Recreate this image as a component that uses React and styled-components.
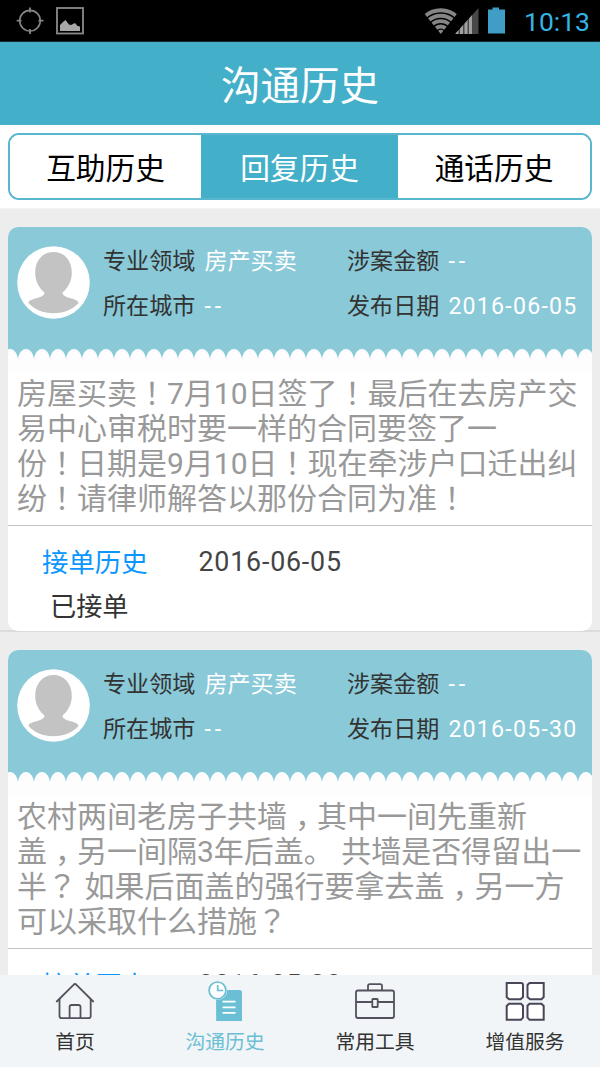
import React from 'react';
import styled, { createGlobalStyle, css } from 'styled-components';

const GlobalStyle = createGlobalStyle`
  * {
    box-sizing: border-box;
  }
  body {
    margin: 0;
    background: #ededed;
    font-family: Roboto, 'Noto Sans CJK SC', sans-serif;
  }
`;

const Screen = styled.div`
  display: flex;
  flex-direction: column;
  width: 600px;
  height: 1067px;
  overflow: hidden;
  background: #ededed;
`;

const StatusBar = styled.div`
  display: flex;
  flex: none;
  justify-content: space-between;
  height: 42px;
  background: #000;
  border-bottom: 1px solid #1b2a30;
`;

const Clock = styled.span`
  width: 86px;
  padding-right: 10px;
  text-align: right;
  font-size: 26.5px;
  line-height: 44px;
  color: #33b5e5;
`;

const StatusRight = styled.div`
  display: flex;
`;

const Header = styled.header`
  flex: none;
  height: 83px;
  padding-top: 3px;
  background: #44afc8;
  color: #fff;
  font-size: 39.5px;
  line-height: 84px;
  text-align: center;
`;

const TabsWrap = styled.div`
  flex: none;
  height: 84px;
  padding: 8px 8px 0;
  background: #fff;
  border-bottom: 1px solid #f4f4f4;
`;

const Tabs = styled.div`
  display: grid;
  grid-template-columns: 191px 197px 1fr;
  height: 67px;
  border: 2px solid #58b7ce;
  border-radius: 11px;
  overflow: hidden;
`;

const Tab = styled.button`
  border: 0;
  padding: 4px 0 0;
  background: ${({ $active }) => ($active ? '#44afc8' : '#fff')};
  color: ${({ $active }) => ($active ? '#fff' : '#000')};
  font-family: inherit;
  font-size: 29.7px;
  line-height: 59px;
`;

const List = styled.main`
  flex: 1;
  min-height: 0;
  overflow: hidden;
`;

const Item = styled.section`
  height: 423px;
  padding: 17.5px 8px 0;
  border-bottom: 2px solid #dcdcdc;
`;

const Card = styled.article`
  height: 404px;
  border-radius: 10px;
  overflow: hidden;
  background: #fff;
`;

const CardHead = styled.div`
  display: flex;
  height: 122px;
  padding: 19px 0 0 8.5px;
  background: #89c9d8;
`;

const Scallop = styled.svg`
  display: block;
  width: 584px;
  height: 24px;
`;

const Fields = styled.div`
  display: grid;
  grid-template-columns: 244px 1fr;
  grid-auto-rows: 45px;
  margin: -7px 0 0 13.5px;
  flex: 1;
`;

const Field = styled.div`
  font-size: 23.1px;
  line-height: 45px;
  white-space: nowrap;
  color: #333;
`;

const Value = styled.span`
  margin-left: 9px;
  color: #fff;
`;

const Numeric = styled(Value)`
  letter-spacing: 1.25px;
`;

const Dashes = styled(Value)`
  letter-spacing: 4px;
`;

const Body = styled.div`
  height: 153px;
  padding: 3px 0 0 9px;
  border-bottom: 1px solid #c4c4c4;
  font-size: 30px;
  line-height: 35px;
  color: #999;
  white-space: pre;
`;

const Line = styled.div`
  height: 35.15px;
`;

const Centred = styled.span`
  font-family: 'Noto Sans CJK TC', sans-serif;
  line-height: 0;
`;

const Comma = styled.span`
  margin: 0 -8px 0 8px;
`;

const History = styled.div`
  padding: 15px 0 0 34px;
  font-size: 26.4px;
  line-height: 44px;
  color: #333;
`;

const HistoryRow = styled.div`
  display: flex;
  height: 44px;
`;

const HistoryTitle = styled.span`
  width: 156.5px;
  color: #0a96ff;
`;

const HistoryDate = styled.span`
  margin-top: -1px;
  color: #444;
  font-size: 26.8px;
  letter-spacing: 0.8px;
`;

const HistoryState = styled.div`
  padding-left: 8px;
  font-size: 26.2px;
`;

const Nav = styled.nav`
  display: grid;
  grid-template-columns: repeat(4, 1fr);
  flex: none;
  height: 92px;
  background: #f1f5f7;
`;

const NavItem = styled.a`
  display: flex;
  flex-direction: column;
  align-items: center;
  padding-top: 4px;
  font-size: 19.8px;
  line-height: 32px;
  color: #333;
  ${({ $active }) =>
    $active &&
    css`
      color: #6bbfd4;
    `}
`;

const NavIcon = styled.svg`
  flex: none;
  width: 60px;
  height: 48px;
`;

const Avatar = () => (
  <svg width="73" height="73" viewBox="0 0 73 73">
    <circle cx="36.5" cy="36.5" r="36.3" fill="#fff" />
    <path
      d="M36.5 6C26 6 18.2 14 18.2 27C18.2 35 22 42 27.5 46.5C27.5 53 12 51.500 11.500 57C17 63.500 26 67.300 36.500 67.300C47 67.300 56 63.500 61.500 57C61 51.500 45.500 53 45.500 46.500C51 42 54.800 35 54.800 27C54.800 14 47 6 36.500 6Z"
      fill="#c3c3c3"
    />
  </svg>
);

// one arch every 16px, the first one is cut by the card edge
const ARCHES = Array.from({ length: 38 }, (_, i) => {
  const x = -6 + i * 16;
  return `C${x + 2} -3.2 ${x + 14} -3.2 ${x + 16} 10`;
}).join('');

const ScallopEdge = () => (
  <Scallop viewBox="0 0 584 24">
    <rect width="584" height="12" fill="#89c9d8" />
    <path d={`M-6 10${ARCHES}V24H-6Z`} fill="#fdfdfd" />
  </Scallop>
);

const LeftStatusIcons = () => (
  <svg width="100" height="41" viewBox="0 0 100 41" fill="none">
    <circle cx="30" cy="20.700" r="10.300" stroke="#858585" strokeWidth="1.600" />
    <path
      d="M30 7.500V12.500M30 29V34M16.700 20.700H21.500M38.500 20.700H43.500"
      stroke="#858585"
      strokeWidth="1.800"
    />
    <rect x="57" y="8" width="26" height="25.500" stroke="#8a8a8a" strokeWidth="1.800" />
    <path
      d="M60 31V25L63 22L65.500 20L69 24.500L71 25L75 23L77.500 26L80 26.500V31Z"
      fill="#a8a8a8"
    />
  </svg>
);

const RightStatusIcons = () => (
  <svg width="90" height="41" viewBox="0 0 90 41" fill="none">
    <defs>
      <clipPath id="wifi">
        <path d="M16.800 34L-1 12Q16.800 2 34.500 12Z" />
      </clipPath>
      <clipPath id="signal">
        <path d="M31 34L54.500 8V34Z" />
      </clipPath>
    </defs>
    <g clipPath="url(#wifi)" stroke="#858585" strokeWidth="3.900">
      <circle cx="16.800" cy="34" r="23.700" />
      <circle cx="16.800" cy="34" r="18.300" />
      <circle cx="16.800" cy="34" r="12.900" />
      <circle cx="16.800" cy="34" r="7.500" />
      <circle cx="16.800" cy="34" r="2.200" />
    </g>
    <g clipPath="url(#signal)">
      <path d="M30 6H55V34H30Z" fill="#484848" />
      <path d="M33 6V34M37.500 6V34M42 6V34M46.500 6V34" stroke="#a0a0a0" strokeWidth="3" />
    </g>
    <path d="M64 9.500H68.500V7.500H75V9.500H81V33.500H64Z" fill="#409dc5" />
  </svg>
);

const HomeIcon = () => (
  <NavIcon viewBox="0 0 60 48" fill="none" stroke="#54515f" strokeWidth="1.800">
    <path d="M11.300 23L28.500 5.800Q30 4.200 31.500 5.800L48.700 23" />
    <path d="M14.500 20V37Q14.500 39.200 16.700 39.200H43.500Q45.700 39.200 45.700 37V20" />
    <path d="M24.600 39V28Q24.600 26 26.600 26H33.500Q35.500 26 35.500 28V39" />
  </NavIcon>
);

const RecordIcon = () => (
  <NavIcon viewBox="0 0 60 48" fill="none">
    <path d="M21 11H44.500Q47 11 47 13.500V42H21.200Z" fill="#6bbfd4" />
    <circle cx="22.500" cy="11.400" r="9.600" fill="#f1f5f7" />
    <circle cx="22.500" cy="11.400" r="8.400" fill="#fff" stroke="#6bbfd4" strokeWidth="1.700" />
    <path d="M22.700 6V11.500H28.200" stroke="#6bbfd4" strokeWidth="1.700" />
    <path d="M27.500 22.700H40.500M27.500 28.300H40.500M27.500 33.900H40.500" stroke="#fff" strokeWidth="1.700" />
  </NavIcon>
);

const ToolsIcon = () => (
  <NavIcon viewBox="0 0 60 48" fill="none" stroke="#54515f" strokeWidth="1.800">
    <rect x="11" y="11.500" width="38" height="27.500" rx="2" />
    <path d="M23 11V7Q23 5.200 24.800 5.200H35.200Q37 5.200 37 7V11M11 23H27M33 23H49" />
    <rect x="27.300" y="20" width="5.400" height="8" rx="0.600" />
  </NavIcon>
);

const ServiceIcon = () => (
  <NavIcon viewBox="0 0 60 48" fill="#fff" stroke="#4a4657" strokeWidth="2">
    <path d="M11.700 4H26Q28 4 28 6V18L25.500 20.200H14L11.700 18Z" />
    <path d="M34.500 4H48.700V18L46.500 20.200H35L32.500 18V6Z" />
    <path d="M14 24.700H26L28 26.700V38.500L26 40.800H11.700V27Z" />
    <path d="M34.500 24.700H46.500L48.700 27V40.800H34.500L32.500 38.500V26.700Z" />
  </NavIcon>
);

const TABS = ['互助历史', '回复历史', '通话历史'];

const CASES = [
  {
    date: '2016-06-05',
    lines: [
      '房屋买卖！7月10日签了！最后在去房产交',
      '易中心审税时要一样的合同要签了一',
      '份！日期是9月10日！现在牵涉户口迁出纠',
      '纷！请律师解答以那份合同为准！',
    ],
  },
  {
    date: '2016-05-30',
    lines: [
      '农村两间老房子共墙，其中一间先重新',
      '盖，另一间隔3年后盖。 共墙是否得留出一',
      '半？ 如果后面盖的强行要拿去盖，另一方',
      '可以采取什么措施？',
    ],
  },
];

const NAV = [
  { label: '首页', Icon: HomeIcon },
  { label: '沟通历史', Icon: RecordIcon, active: true },
  { label: '常用工具', Icon: ToolsIcon },
  { label: '增值服务', Icon: ServiceIcon },
];

// punctuation sits in the middle of its cell
const renderLine = line =>
  line.split(/([！，？])/).map((part, i) => {
    if (i % 2 === 0) return part;
    return part === '，' ? (
      <Comma key={i}>{part}</Comma>
    ) : (
      <Centred key={i}>{part}</Centred>
    );
  });

function CaseItem({ date, lines }) {
  return (
    <Item>
      <Card>
        <CardHead>
          <Avatar />
          <Fields>
            <Field>
              专业领域<Value>房产买卖</Value>
            </Field>
            <Field>
              涉案金额<Dashes>--</Dashes>
            </Field>
            <Field>
              所在城市<Dashes>--</Dashes>
            </Field>
            <Field>
              发布日期<Numeric>{date}</Numeric>
            </Field>
          </Fields>
        </CardHead>
        <ScallopEdge />
        <Body>
          {lines.map(line => (
            <Line key={line}>{renderLine(line)}</Line>
          ))}
        </Body>
        <History>
          <HistoryRow>
            <HistoryTitle>接单历史</HistoryTitle>
            <HistoryDate>{date}</HistoryDate>
          </HistoryRow>
          <HistoryState>已接单</HistoryState>
        </History>
      </Card>
    </Item>
  );
}

export default function App() {
  return (
    <Screen>
      <GlobalStyle />
      <StatusBar>
        <LeftStatusIcons />
        <StatusRight>
          <RightStatusIcons />
          <Clock>10:13</Clock>
        </StatusRight>
      </StatusBar>
      <Header>沟通历史</Header>
      <TabsWrap>
        <Tabs>
          {TABS.map((tab, i) => (
            <Tab key={tab} $active={i === 1}>
              {tab}
            </Tab>
          ))}
        </Tabs>
      </TabsWrap>
      <List>
        {CASES.map(item => (
          <CaseItem key={item.date} {...item} />
        ))}
      </List>
      <Nav>
        {NAV.map(({ label, Icon, active }) => (
          <NavItem key={label} $active={active}>
            <Icon />
            {label}
          </NavItem>
        ))}
      </Nav>
    </Screen>
  );
}
